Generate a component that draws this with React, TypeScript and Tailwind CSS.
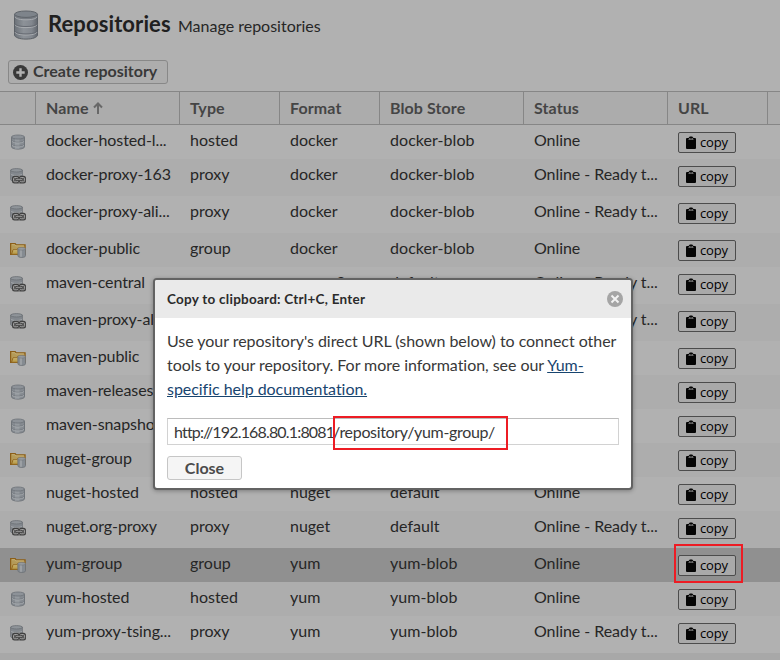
import React from "react";

type Kind = "hosted" | "proxy" | "group";

interface Repo {
  name: string;
  type: Kind;
  format: string;
  blob: string;
  status: string;
  selected?: boolean;
}

const READY = "Online - Ready t...";

const repos: Repo[] = [
  { name: "docker-hosted-l...", type: "hosted", format: "docker", blob: "docker-blob", status: "Online" },
  { name: "docker-proxy-163", type: "proxy", format: "docker", blob: "docker-blob", status: READY },
  { name: "docker-proxy-ali...", type: "proxy", format: "docker", blob: "docker-blob", status: READY },
  { name: "docker-public", type: "group", format: "docker", blob: "docker-blob", status: "Online" },
  { name: "maven-central", type: "proxy", format: "maven2", blob: "default", status: READY },
  { name: "maven-proxy-ali...", type: "proxy", format: "maven2", blob: "default", status: READY },
  { name: "maven-public", type: "group", format: "", blob: "", status: "" },
  { name: "maven-releases", type: "hosted", format: "", blob: "", status: "" },
  { name: "maven-snapshots", type: "hosted", format: "", blob: "", status: "" },
  { name: "nuget-group", type: "group", format: "", blob: "", status: "" },
  { name: "nuget-hosted", type: "hosted", format: "nuget", blob: "default", status: "Online" },
  { name: "nuget.org-proxy", type: "proxy", format: "nuget", blob: "default", status: READY },
  { name: "yum-group", type: "group", format: "yum", blob: "yum-blob", status: "Online", selected: true },
  { name: "yum-hosted", type: "hosted", format: "yum", blob: "yum-blob", status: "Online" },
  { name: "yum-proxy-tsing...", type: "proxy", format: "yum", blob: "yum-blob", status: READY },
];

const COLS = "grid grid-cols-[36px_144px_100px_100px_144px_144px_100px_1fr]";

function Cylinder({ className }: { className: string }) {
  return (
    <svg viewBox="0 0 16 16" className={className}>
      <path d="M1.500 3.200v9.600c0 1.300 2.900 2.300 6.500 2.300s6.500-1 6.500-2.300V3.200z" fill="#858a90" stroke="#6a6f75" strokeWidth=".9" />
      <path d="M5 5v9.800h4.500V5z" fill="#959a9f" />
      <ellipse cx="8" cy="3" rx="6.500" ry="2" fill="#8d9298" stroke="#6c7177" strokeWidth=".8" />
      <path d="M1.600 6.400c1 1.500 3.600 1.900 6.400 1.900s5.400-.4 6.400-1.900M1.600 10.300c1 1.500 3.600 1.900 6.400 1.900s5.400-.4 6.400-1.900" fill="none" stroke="#6c7177" strokeWidth=".8" />
      <path d="M2 7.300c1 1.300 3.400 1.700 6 1.700s5-.4 6-1.700M2 11.200c1 1.300 3.400 1.700 6 1.700s5-.4 6-1.700" fill="none" stroke="#a9adb1" strokeWidth=".8" />
    </svg>
  );
}

function BigCylinder() {
  return (
    <svg viewBox="0 0 26 30" className="h-[30px] w-[26px] shrink-0">
      <defs>
        <linearGradient id="steel" x1="0" x2="1" y1="0" y2="0">
          <stop offset="0" stopColor="#6c7279" />
          <stop offset=".4" stopColor="#8d9298" />
          <stop offset=".75" stopColor="#82878e" />
          <stop offset="1" stopColor="#62676e" />
        </linearGradient>
      </defs>
      <path d="M1.500 4.500v20.500c0 2.300 5 4.100 11.500 4.100s11.500-1.800 11.500-4.100v-20.500z" fill="url(#steel)" stroke="#5b6066" strokeWidth="1" />
      <path d="M1.500 4v2.800c0 1.700 5 3 11.500 3s11.500-1.300 11.500-3v-2.800z" fill="#777c83" />
      <ellipse cx="13" cy="4.200" rx="11.400" ry="3.200" fill="#7e848b" stroke="#5f646a" />
      <path d="M2 7c1 1.900 5.400 2.800 11 2.800s10-.9 11-2.800M2 14.800c1 1.900 5.400 2.800 11 2.800s10-.9 11-2.800M2 22.200c1 1.900 5.400 2.800 11 2.800s10-.9 11-2.800" fill="none" stroke="#a9acb0" strokeWidth="1" />
      <path d="M2 13.700c1 1.900 5.400 2.800 11 2.800s10-.9 11-2.800M2 21.100c1 1.900 5.400 2.800 11 2.800s10-.9 11-2.800" fill="none" stroke="#62676e" strokeWidth=".9" />
    </svg>
  );
}

function KindIcon({ kind }: { kind: Kind }) {
  if (kind === "hosted") return <Cylinder className="size-4" />;
  if (kind === "proxy") {
    return (
      <svg viewBox="0 0 16 16" className="size-4">
        <path d="M.6 2.200v9.300c0 1 2.700 2 5.900 2s5.900-1 5.900-2V2.200z" fill="#83888e" stroke="#696e73" strokeWidth=".8" />
        <ellipse cx="6.500" cy="2.300" rx="5.900" ry="1.700" fill="#8f9499" stroke="#696e73" strokeWidth=".8" />
        <path d="M.8 6c1 1.200 3 1.500 5.700 1.500s4.700-.3 5.700-1.500" fill="none" stroke="#a5a9ad" strokeWidth=".9" />
        <rect x="2" y="7.800" width="14" height="7.700" rx="2.500" fill="#404040" />
        <g fill="#5a5a5a" stroke="#a0a0a0" strokeWidth="1">
          <rect x="3.500" y="9.500" width="4.600" height="4.300" rx="1.200" />
          <rect x="10" y="9.500" width="4.600" height="4.300" rx="1.200" />
        </g>
        <path d="M9.100 7.500v1.400M9.100 14.300v1.500" stroke="#999" strokeWidth="1" />
        <path d="M6 11.700h6" stroke="#303030" strokeWidth="2.200" />
        <path d="M6 11.700h6" stroke="#a0a0a0" strokeWidth="1" />
      </svg>
    );
  }
  return (
    <svg viewBox="0 0 16 16" className="size-4">
      <path d="M.6 12.400V1.600h4.600l1 1.200h8.900v9.600z" fill="#b49a58" stroke="#8b5e19" strokeWidth="1.200" />
      <path d="M1.700 2.700h3l1 1.200h8.200" fill="none" stroke="#c8b47c" strokeWidth=".9" />
      <path d="M1.600 12.200 3 7.800h3.700l1.400-1.700h7.300v6.100z" fill="#bda253" stroke="#91641d" strokeWidth=".9" />
      <path d="M3.300 8.800H7" stroke="#cfbd83" strokeWidth=".8" />
      <path d="M7.900 7v6.800c0 1 1.700 1.700 3.800 1.700s3.800-.7 3.800-1.700V7z" fill="#858b91" stroke="#6c7177" strokeWidth=".8" />
      <path d="M10 8v6.800h2V8z" fill="#9ca0a4" />
      <ellipse cx="11.700" cy="6.800" rx="3.800" ry="1.300" fill="#979ca1" stroke="#757a7f" strokeWidth=".7" />
    </svg>
  );
}

function Clipboard() {
  return (
    <svg viewBox="0 0 10 13" className="h-[13px] w-[10px]">
      <path d="M1 2h1.500L3.800.4h2.400L7.500 2H9q1 0 1 1v9q0 1-1 1H1q-1 0-1-1V3q0-1 1-1z" fill="#050505" />
      <path d="M2.200 3.700 3.700 2.100h2.600l1.500 1.600z" fill="#8a8a8a" />
      <path d="M4 2.700h2" stroke="#222" strokeWidth=".9" />
    </svg>
  );
}

function HeadCell({ children }: { children?: React.ReactNode }) {
  return <div className="flex items-center border-r border-[#868686] pb-px pl-[10px]">{children}</div>;
}

function Row({ repo, index }: { repo: Repo; index: number }) {
  const height = repo.type === "proxy" ? "h-[37px]" : "h-[34px]";
  const bg = repo.selected ? "bg-[#909090]" : index % 2 === 0 ? "bg-[#b1b1b1]" : "bg-[#adadad]";
  return (
    <div className={`${COLS} ${height} ${bg} shrink-0 text-[#262626]`}>
      <div className="pt-[9px] pl-[10px]"><KindIcon kind={repo.type} /></div>
      <div className="pt-[3px] pl-[10px] tracking-[-0.1px] whitespace-nowrap">{repo.name}</div>
      <div className="pt-[3px] pl-[10px]">{repo.format && repo.type}</div>
      <div className="pt-[3px] pl-[10px]">{repo.format}</div>
      <div className="pt-[3px] pl-[10px] tracking-[0.05px]">{repo.blob}</div>
      <div className="pt-[3px] pl-[10px] tracking-[-0.05px] whitespace-nowrap">{repo.status}</div>
      <div className="pt-[7px] pl-[10px]">
        <button className="flex h-[21px] w-[58px] items-center gap-1 rounded-[2px] border border-[#4c4c4c] bg-[#a9a9a9] pl-[7px] font-['Open_Sans',sans-serif] text-[13px] leading-none tracking-[-0.2px] text-black">
          <Clipboard />
          <span>copy</span>
        </button>
      </div>
    </div>
  );
}

function Dialog() {
  return (
    <div className="absolute top-[278px] left-[153px] flex h-[212px] w-[480px] flex-col overflow-hidden rounded-[4px] border-2 border-[#636363] bg-white shadow-[0_1px_4px_rgba(0,0,0,0.3)]">
      <div className="flex h-[38px] shrink-0 items-center justify-between bg-[#eaeaea] pr-2 pl-3">
        <h2 className="text-[13.5px] font-bold tracking-[0.25px] text-[#2b2b2b]">Copy to clipboard: Ctrl+C, Enter</h2>
        <svg viewBox="0 0 16 16" className="size-4">
          <circle cx="8" cy="8" r="8" fill="#a5a5a5" />
          <path d="m4.500 4.500 7 7m0-7-7 7" stroke="#f2f2f2" strokeWidth="2" />
        </svg>
      </div>
      <div className="flex flex-col items-start pt-[11px] pl-3 text-[#383838]">
        <div className="text-base leading-6 tracking-[-0.04px] whitespace-nowrap">
          <p>Use your repository's direct URL (shown below) to connect other</p>
          <p className="tracking-[-0.05px]">tools to your repository. For more information, see our <a className="text-[#18456f] underline">Yum-</a></p>
          <p className="tracking-0"><a className="text-[#18456f] underline">specific help documentation.</a></p>
        </div>
        <div className="mt-[17px] flex h-[27px] w-[452px] items-center border border-[#d2d2d2] border-t-[#bcbcbc] pl-[6px] whitespace-nowrap">
          <span className="w-[159px] shrink-0 tracking-[-0.83px]">http://192.168.80.1:8081</span>
          <span className="tracking-[-0.33px]">/repository/yum-group/</span>
        </div>
        <button className="mt-[11px] h-6 w-[75px] rounded-[3px] border border-[#c6c6c6] bg-[#f5f5f5] pb-px text-base leading-none font-bold text-[#4b4b4b]">Close</button>
      </div>
    </div>
  );
}

export default function App() {
  return (
    <main className="relative flex h-[660px] w-[780px] flex-col overflow-hidden bg-[#b1b1b1] font-['Lato',sans-serif] text-base">
      <header className="flex h-[60px] shrink-0 items-center pb-[10px] pl-[13px]">
        <BigCylinder />
        <h1 className="ml-[9px] w-[130px] pb-[3px] text-[22px] font-bold tracking-[0.1px] text-[#202020]">Repositories</h1>
        <span className="pt-px text-base text-[#262626]">Manage repositories</span>
      </header>
      <div className="flex h-[31px] shrink-0 pl-2">
        <button className="flex h-6 w-40 items-center gap-[5px] rounded-[3px] border border-[#888] bg-[#adadad] pl-1 text-base leading-none font-bold whitespace-nowrap text-[#393939]">
          <svg viewBox="0 0 15 15" className="size-[15px]">
            <circle cx="7.500" cy="7.500" r="7.500" fill="#393939" />
            <path d="M7.500 3.300v8.400M3.300 7.500h8.400" stroke="#b1b1b1" strokeWidth="2.400" />
          </svg>
          <span className="pb-0.5">Create repository</span>
        </button>
      </div>
      <div className={`${COLS} h-[34px] shrink-0 border-y border-[#868686] bg-[#acacac] text-base font-bold tracking-[0.1px] text-[#454545]`}>
        <HeadCell />
        <HeadCell>
          Name
          <svg viewBox="0 0 10 12" className="ml-1 h-3 w-[10px]"><path d="M5 12V2M1 5.500 5 1.500l4 4" fill="none" stroke="#686868" strokeWidth="2" /></svg>
        </HeadCell>
        <HeadCell>Type</HeadCell>
        <HeadCell>Format</HeadCell>
        <HeadCell>Blob Store</HeadCell>
        <HeadCell>Status</HeadCell>
        <HeadCell>URL</HeadCell>
      </div>
      {repos.map((repo, i) => <Row key={repo.name} repo={repo} index={i} />)}
      <div className="grow bg-[#a8a8a8]" />
      <Dialog />
      <div className="absolute top-[416px] left-[333px] h-[34px] w-[175px] border-2 border-[#ed1c24]" />
      <div className="absolute top-[544px] left-[674px] h-[39px] w-[69px] border-2 border-[#ed1c24]" />
    </main>
  );
}
